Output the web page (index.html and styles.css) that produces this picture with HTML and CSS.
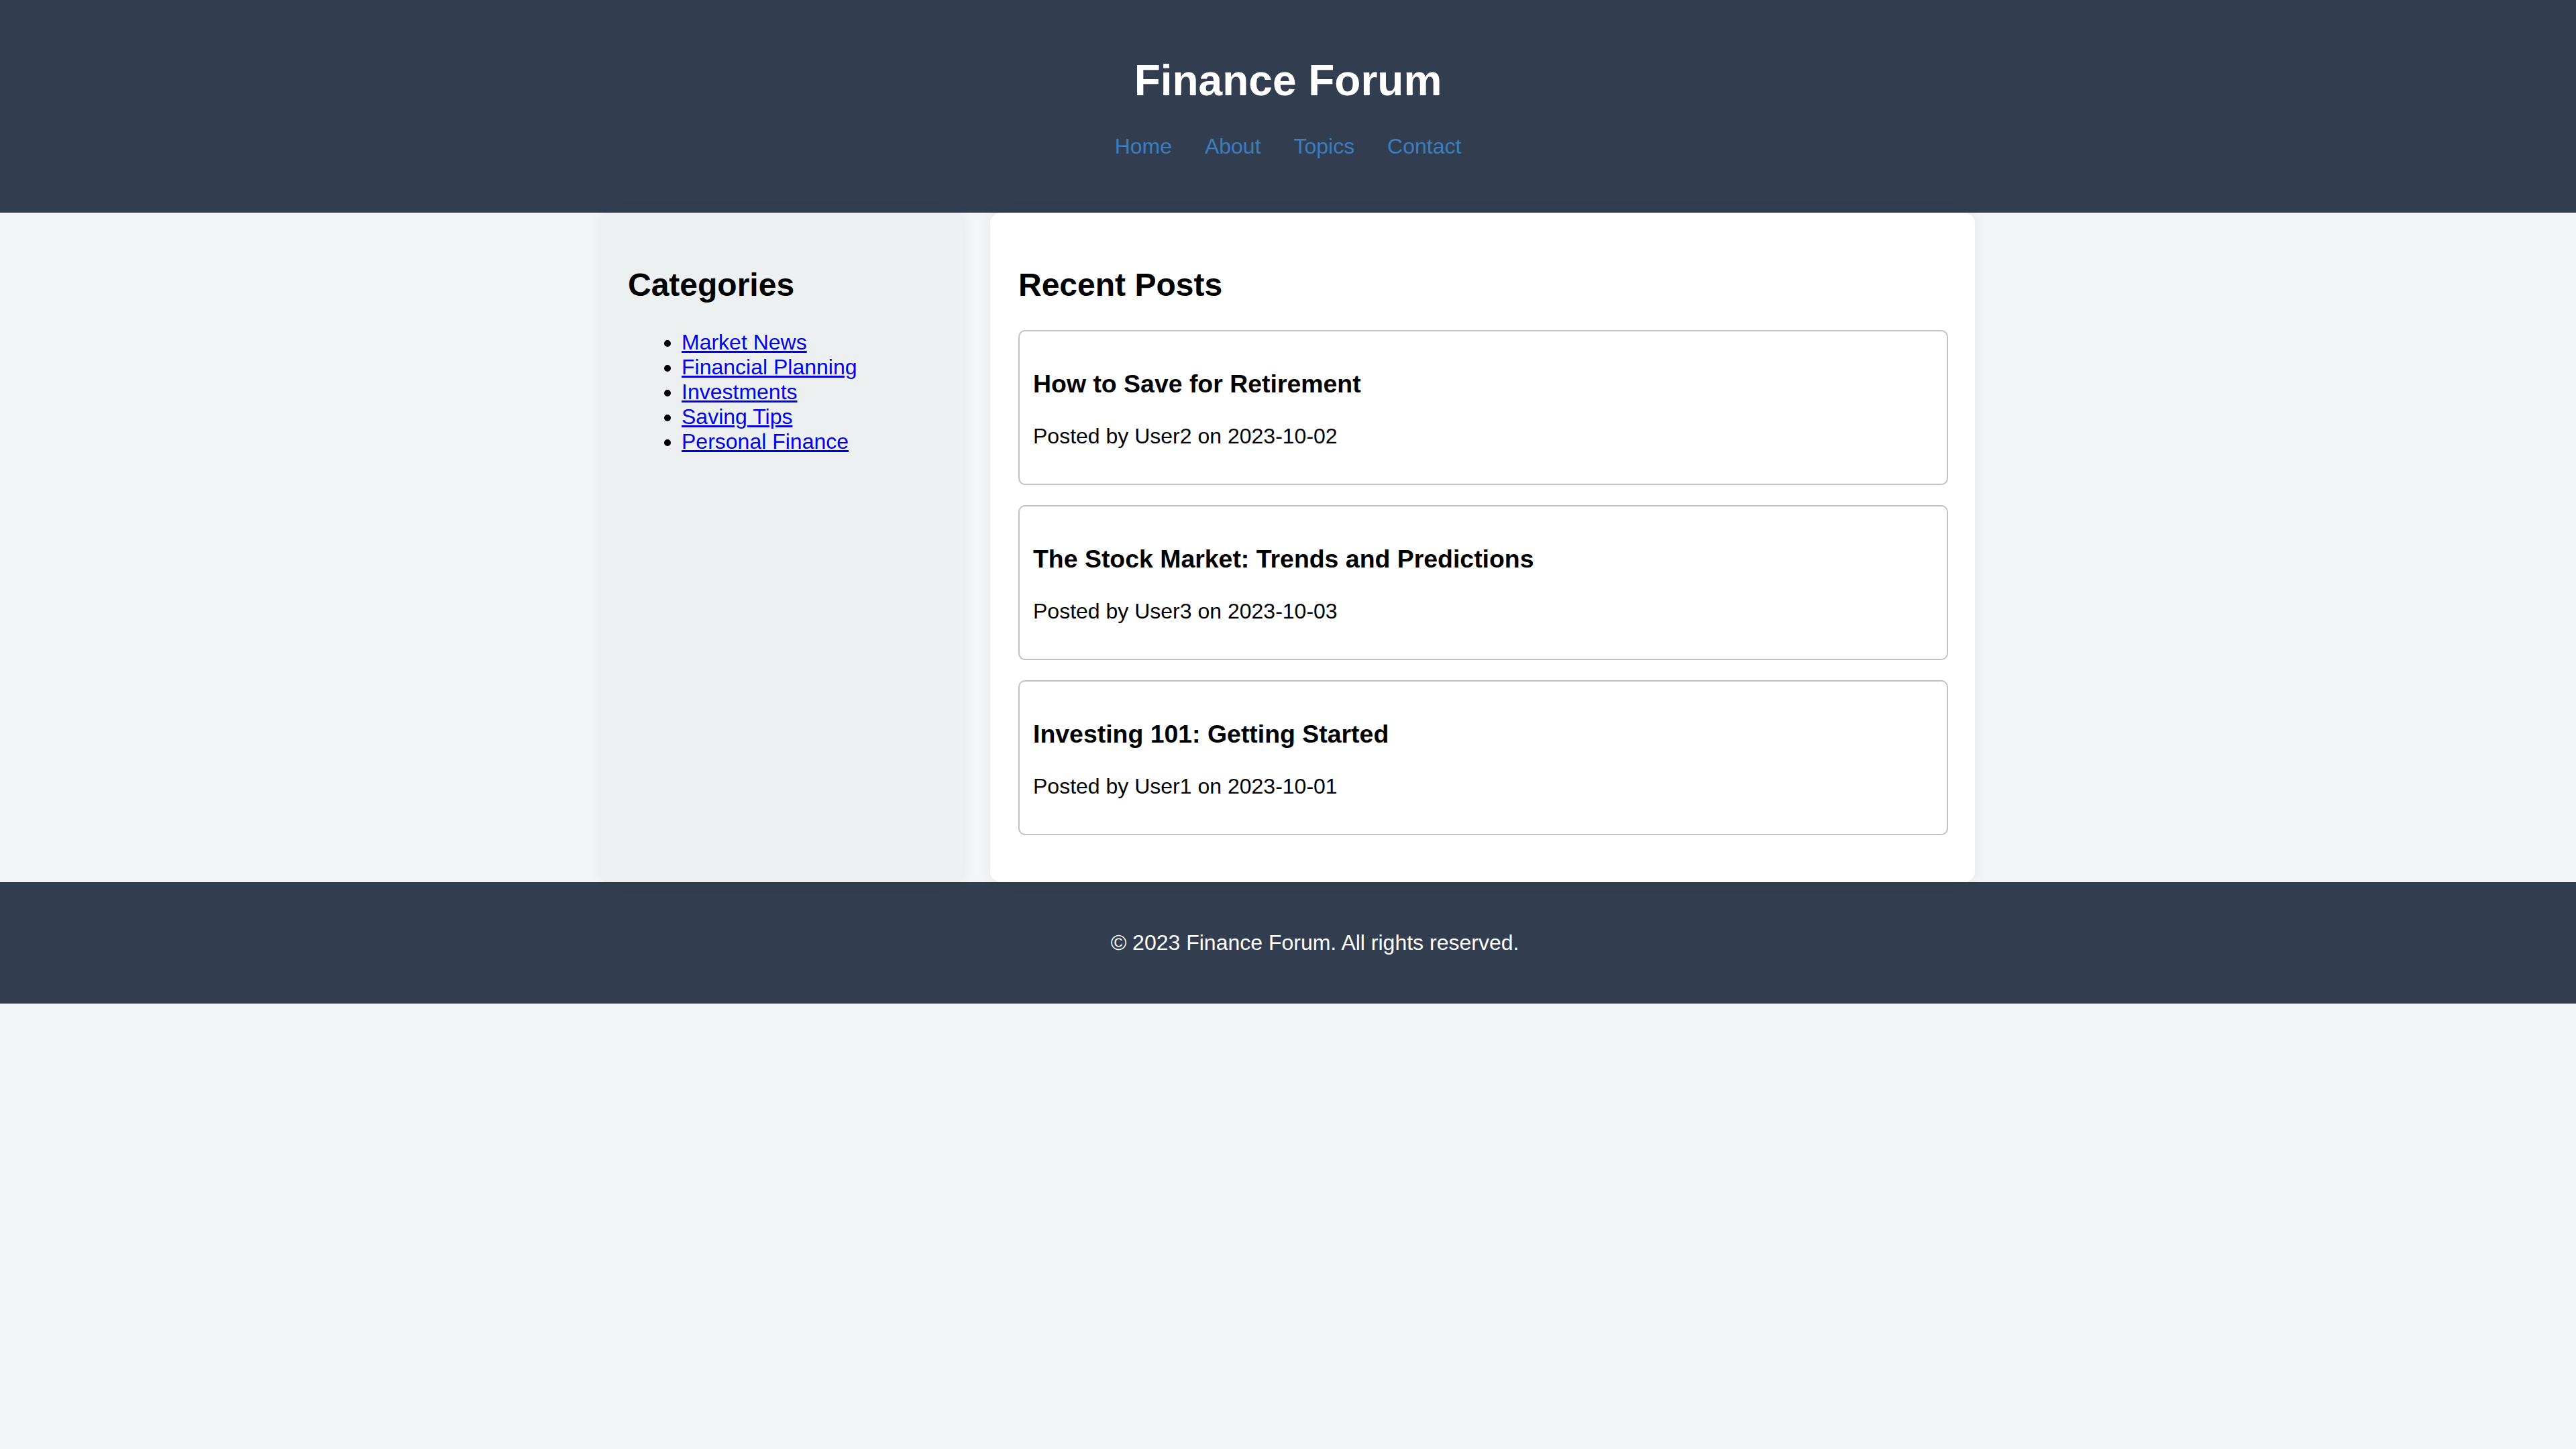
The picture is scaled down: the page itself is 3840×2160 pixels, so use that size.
FILE: index.html
```html
<!DOCTYPE html>
<html lang="en">
<head>
  <meta charset="UTF-8" />
  <meta name="viewport" content="width=device-width, initial-scale=1.0"/>
  <title>Finance Forum</title>
  <link rel="stylesheet" href="styles.css">
</head>
<body>
  <header class="site-header">
    <h1>Finance Forum</h1>
    <ul class="nav">
      <li><a href="#">Home</a></li>
      <li><a href="#">About</a></li>
      <li><a href="#">Topics</a></li>
      <li><a href="#">Contact</a></li>
    </ul>
  </header>

  <div class="container">
    <aside class="sidebar">
      <h2>Categories</h2>
      <ul>
        <li><a href="#">Market News</a></li>
        <li><a href="#">Financial Planning</a></li>
        <li><a href="#">Investments</a></li>
        <li><a href="#">Saving Tips</a></li>
        <li><a href="#">Personal Finance</a></li>
      </ul>
    </aside>

    <main class="content">
      <h2>Recent Posts</h2>
      <div class="post">
        <h3>How to Save for Retirement</h3>
        <p>Posted by User2 on 2023-10-02</p>
      </div>
      <div class="post">
        <h3>The Stock Market: Trends and Predictions</h3>
        <p>Posted by User3 on 2023-10-03</p>
      </div>
      <div class="post">
        <h3>Investing 101: Getting Started</h3>
        <p>Posted by User1 on 2023-10-01</p>
      </div>
    </main>
  </div>

  <footer class="site-footer">
    <p>&copy; 2023 Finance Forum. All rights reserved.</p>
  </footer>
</body>
</html>
```

FILE: styles.css
```css
body {
  margin: 0;
  font-family: "Liberation Sans", Arial, sans-serif;
  font-size: 32px;
  background-color: #f4f5f7;
  color: #000;
}
.site-header {
  background-color: #323e4f;
  color: #fff;
  text-align: center;
  padding: 40px;
}
.site-header h1 {
  font-size: 64px;
  margin: 43px 0;
}
.nav {
  list-style: none;
  padding: 0;
  margin: 0 0 40px;
}
.nav li {
  display: inline;
  margin: 0 20px;
}
.nav a {
  color: #3a7ebf;
  text-decoration: none;
}
.container {
  display: flex;
  gap: 40px;
  width: 2048px;
  margin: 0 auto;
}
.sidebar {
  width: 540px;
  box-sizing: border-box;
  padding: 40px;
  background-color: #ecf0f1;
  border-radius: 16px;
  box-shadow: 0 0 20px rgba(0,0,0,0.07);
}
.sidebar h2, .content h2 {
  font-size: 48px;
  margin: 40px 0;
}
.sidebar ul {
  margin: 32px 0;
  padding-left: 80px;
}
.sidebar a {
  color: #0000ee;
}
.content {
  flex: 1;
  padding: 40px 40px 40px 42px;
  background-color: #fff;
  border-radius: 16px;
  box-shadow: 0 0 20px rgba(0,0,0,0.07);
}
.post {
  border: 2px solid #bdc3c7;
  border-radius: 10px;
  padding: 20px;
  margin-bottom: 30px;
}
.post h3 {
  font-size: 37.44px;
  margin: 37.44px 0;
}
.post p {
  margin: 32px 0;
}
/* text sits off-centre to the right, as in the original */
.site-footer {
  background-color: #323e4f;
  color: #fff;
  text-align: center;
  padding: 40px 0 40px 80px;
}
.site-footer p {
  margin: 32px 0;
}
```
